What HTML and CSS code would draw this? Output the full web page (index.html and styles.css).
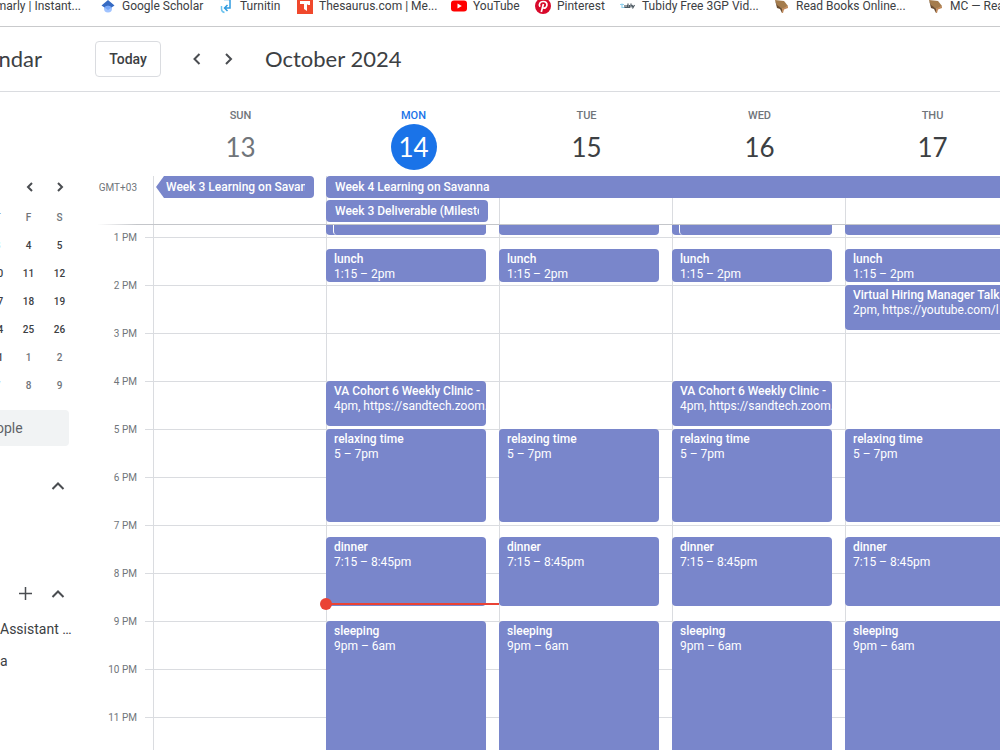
FILE: index.html
```html
<!DOCTYPE html>
<html lang="en">

<head>
    <meta charset="UTF-8">
    <meta name="viewport" content="width=device-width, initial-scale=1.0">
    <title>Calendar - October 2024</title>
    <link rel="stylesheet" href="styles.css">
</head>

<body>
    <nav class="bookmarks">
        <a href="#" class="cut">marly | Instant...</a>
        <a href="#">
            <svg width="16" height="16" viewBox="0 0 16 16"><circle cx="8" cy="10.500" r="4" fill="#a0c3ff"/><path d="M8 2L1.500 7.500l3 2a4.500 4.500 0 0 1 7 0l3-2z" fill="#356ac3"/><path d="M4.500 9.500a4.500 4.500 0 0 1 7 0L8 12z" fill="#76a7fa"/></svg>
            <span>Google Scholar</span>
        </a>
        <a href="#">
            <svg width="16" height="16" viewBox="0 0 16 16" fill="none" stroke="#2f9be0" stroke-width="1.500"><path d="M6 1.500h6v8.500H7M9.500 7L6.500 10l3 3"/><path d="M3.500 8v3c0 2 1 3 3 3.500" stroke="#6cc3ee"/></svg>
            <span>Turnitin</span>
        </a>
        <a href="#">
            <svg width="16" height="16" viewBox="0 0 16 16"><path d="M0 0h16v16H0z" fill="#f0482c"/><path d="M3 3h10v4h-2.500V6H10v7L7 11V6H3z" fill="#fff"/></svg>
            <span>Thesaurus.com | Me...</span>
        </a>
        <a href="#">
            <svg width="16" height="16" viewBox="0 0 16 16"><rect y="2.500" width="16" height="11" rx="3" fill="#f00"/><path d="M6.500 5.500v5L10.800 8z" fill="#fff"/></svg>
            <span>YouTube</span>
        </a>
        <a href="#">
            <svg width="16" height="16" viewBox="0 0 16 16"><circle cx="8" cy="8" r="8" fill="#d8092b"/><path d="M5 8.800C3.300 6 5.200 3.500 8.200 3.500c2.600 0 4.100 1.700 3.700 3.900-.4 2.400-2.700 3.500-4.100 2.100M8.400 6L6.300 14" fill="none" stroke="#fff" stroke-width="1.700"/></svg>
            <span>Pinterest</span>
        </a>
        <a href="#">
            <svg width="16" height="16" viewBox="0 0 16 16" fill="none"><path d="M0 6.500h4M2 5.500v4h3" stroke="#8fd0ee" stroke-width="1.200"/><path d="M5 7v2.500h2V7M8 5.500v4h1.500V7M11 5.500v4M12 7l1 2.500M14.500 7l-2 3.500" stroke="#4d5962" stroke-width="1.200"/></svg>
            <span>Tubidy Free 3GP Vid...</span>
        </a>
        <a href="#">
            <svg width="16" height="16" viewBox="0 0 16 16"><path d="M1 2l9 1 4 5-5 3-6-3z" fill="#a47c4d"/><path d="M1 2l2 5 5 3.500v4.500L6 11 3 10z" fill="#6b4d30"/><path d="M8 10.500l6-2.500v2l-4 1.500L9 15H8z" fill="#c08a5c"/></svg>
            <span>Read Books Online...</span>
        </a>
        <a href="#">
            <svg width="16" height="16" viewBox="0 0 16 16"><path d="M1 2l9 1 4 5-5 3-6-3z" fill="#a47c4d"/><path d="M1 2l2 5 5 3.500v4.500L6 11 3 10z" fill="#6b4d30"/><path d="M8 10.500l6-2.500v2l-4 1.500L9 15H8z" fill="#c08a5c"/></svg>
            <span>MC — Read</span>
        </a>
    </nav>

    <header class="topbar">
        <div class="brand">ndar</div>
        <button class="today">Today</button>
        <button class="icon-btn" aria-label="Previous week"><svg width="20" height="20" viewBox="0 0 20 20"><path d="M12.500 5L7.500 10l5 5"/></svg></button>
        <button class="icon-btn" aria-label="Next week"><svg width="20" height="20" viewBox="0 0 20 20"><path d="M7 5l5 5-5 5"/></svg></button>
        <h1>October 2024</h1>
    </header>

    <main>
        <aside class="sidebar">
            <div class="mini-nav">
                <button class="icon-btn" aria-label="Previous month"><svg width="16" height="16" viewBox="0 0 16 16"><path d="M10 4L6 8l4 4"/></svg></button>
                <button class="icon-btn" aria-label="Next month"><svg width="16" height="16" viewBox="0 0 16 16"><path d="M6 4l4 4-4 4"/></svg></button>
            </div>
            <table class="mini-cal">
                <thead>
                    <tr><th>T</th><th>F</th><th>S</th></tr>
                </thead>
                <tbody>
                    <tr><td>3</td><td>4</td><td>5</td></tr>
                    <tr><td>10</td><td>11</td><td>12</td></tr>
                    <tr><td>17</td><td>18</td><td>19</td></tr>
                    <tr><td>24</td><td>25</td><td>26</td></tr>
                    <tr><td>31</td><td class="other">1</td><td class="other">2</td></tr>
                    <tr><td class="other">7</td><td class="other">8</td><td class="other">9</td></tr>
                </tbody>
            </table>
            <input class="people" type="text" placeholder="ople" aria-label="People">
            <div class="side-head">
                <button class="icon-btn" aria-label="Collapse my calendars"><svg width="20" height="20" viewBox="0 0 20 20"><path d="M4.500 13L10 7.500l5.500 5.500"/></svg></button>
            </div>
            <div class="side-head others">
                <button class="icon-btn" aria-label="Add calendar"><svg width="20" height="20" viewBox="0 0 20 20"><path class="thin" d="M9.500 3v13M3 9.500h13"/></svg></button>
                <button class="icon-btn" aria-label="Collapse other calendars"><svg width="20" height="20" viewBox="0 0 20 20"><path d="M4.500 13L10 7.500l5.500 5.500"/></svg></button>
            </div>
            <ul class="cal-list">
                <li>Assistant …</li>
                <li>a</li>
            </ul>
        </aside>

        <section class="week">
            <div class="day-heads">
                <div class="day past"><h2>SUN</h2><span>13</span></div>
                <div class="day now"><h2>MON</h2><span>14</span></div>
                <div class="day"><h2>TUE</h2><span>15</span></div>
                <div class="day"><h2>WED</h2><span>16</span></div>
                <div class="day"><h2>THU</h2><span>17</span></div>
            </div>

            <div class="all-day">
                <div class="zone">GMT+03</div>
                <div class="all-day-grid">
                    <i class="line d1"></i>
                    <i class="line d2"></i>
                    <i class="line d3"></i>
                    <i class="line d4"></i>
                    <i class="line d5"></i>
                    <div class="chip continued"><span>Week 3 Learning on Savanna</span></div>
                    <div class="chip long"><span>Week 4 Learning on Savanna</span></div>
                    <div class="chip single"><span>Week 3 Deliverable (Milestone</span></div>
                </div>
            </div>
            <div class="divider"></div>

            <div class="timed">
                <div class="hours">
                    <div>1 PM</div>
                    <div>2 PM</div>
                    <div>3 PM</div>
                    <div>4 PM</div>
                    <div>5 PM</div>
                    <div>6 PM</div>
                    <div>7 PM</div>
                    <div>8 PM</div>
                    <div>9 PM</div>
                    <div>10 PM</div>
                    <div>11 PM</div>
                </div>
                <div class="columns">
                    <div class="column"></div>
                    <div class="column">
                        <div class="event morning"></div>
                        <div class="event morning stacked"></div>
                        <div class="event lunch"><b>lunch</b><p>1:15 – 2pm</p></div>
                        <div class="event clinic"><b>VA Cohort 6 Weekly Clinic -</b><p>4pm, https://sandtech.zoom.us</p></div>
                        <div class="event relax"><b>relaxing time</b><p>5 – 7pm</p></div>
                        <div class="event dinner"><b>dinner</b><p>7:15 – 8:45pm</p></div>
                        <div class="event sleep"><b>sleeping</b><p>9pm – 6am</p></div>
                        <div class="now-line"></div>
                    </div>
                    <div class="column">
                        <div class="event morning"></div>
                        <div class="event lunch"><b>lunch</b><p>1:15 – 2pm</p></div>
                        <div class="event relax"><b>relaxing time</b><p>5 – 7pm</p></div>
                        <div class="event dinner"><b>dinner</b><p>7:15 – 8:45pm</p></div>
                        <div class="event sleep"><b>sleeping</b><p>9pm – 6am</p></div>
                    </div>
                    <div class="column">
                        <div class="event morning"></div>
                        <div class="event morning stacked"></div>
                        <div class="event lunch"><b>lunch</b><p>1:15 – 2pm</p></div>
                        <div class="event clinic"><b>VA Cohort 6 Weekly Clinic -</b><p>4pm, https://sandtech.zoom.us</p></div>
                        <div class="event relax"><b>relaxing time</b><p>5 – 7pm</p></div>
                        <div class="event dinner"><b>dinner</b><p>7:15 – 8:45pm</p></div>
                        <div class="event sleep"><b>sleeping</b><p>9pm – 6am</p></div>
                    </div>
                    <div class="column">
                        <div class="event morning"></div>
                        <div class="event lunch"><b>lunch</b><p>1:15 – 2pm</p></div>
                        <div class="event talk"><b>Virtual Hiring Manager Talk</b><p>2pm, https://youtube.com/l</p></div>
                        <div class="event relax"><b>relaxing time</b><p>5 – 7pm</p></div>
                        <div class="event dinner"><b>dinner</b><p>7:15 – 8:45pm</p></div>
                        <div class="event sleep"><b>sleeping</b><p>9pm – 6am</p></div>
                    </div>
                </div>
            </div>
        </section>
    </main>
</body>

</html>
```
FILE: styles.css
```css
* {
    box-sizing: border-box;
    margin: 0;
    padding: 0;
}

body {
    display: flex;
    flex-direction: column;
    height: 100vh;
    overflow: hidden;
    background: #fff;
    color: #3c4043;
    font-family: Roboto, "Liberation Sans", sans-serif;
    font-size: 14px;
}

button {
    border: 0;
    background: none;
    cursor: pointer;
}

li {
    list-style: none;
}

/* bookmarks */
.bookmarks {
    display: grid;
    grid-template-columns: 100px 118px 79px 154px 84px 85px 154px 154px auto;
    flex: none;
    padding-bottom: 14px;
    border-bottom: 1px solid #c9cacc;
}

.bookmarks a {
    display: flex;
    align-items: center;
    gap: 6px;
    height: 12px;
    color: #3c4043;
    font: 12px/16px Roboto, sans-serif;
    text-decoration: none;
    white-space: nowrap;
}

.bookmarks svg {
    flex: none;
}

.bookmarks .cut {
    justify-content: flex-end;
    padding-right: 19px;
}

/* top bar */
.topbar {
    display: flex;
    align-items: center;
    flex: none;
    height: 65px;
    border-bottom: 1px solid #dadce0;
}

.brand {
    display: flex;
    justify-content: flex-end;
    width: 95px;
    padding-right: 53px;
    font: 22px/28px Lato, sans-serif;
}

.today {
    width: 66px;
    height: 36px;
    margin-right: 20px;
    border: 1px solid #dadce0;
    border-radius: 4px;
    color: #3c4043;
    font: 500 14px/20px Roboto, sans-serif;
}

.icon-btn {
    display: flex;
    align-items: center;
    justify-content: center;
    width: 32px;
    height: 32px;
}

.icon-btn path {
    fill: none;
    stroke: #4a4d51;
    stroke-width: 2;
}

.icon-btn .thin {
    stroke-width: 1.5;
}

.topbar h1 {
    margin-left: 20px;
    font: 22px/28px Lato, sans-serif;
}

main {
    display: flex;
    flex: 1;
    min-height: 0;
}

/* sidebar */
.sidebar {
    display: flex;
    flex-direction: column;
    align-items: flex-end;
    flex: none;
    width: 75px;
    padding-top: 79px;
    overflow: hidden;
}

.mini-nav {
    display: flex;
}

.mini-nav .icon-btn {
    width: 30px;
}

.mini-cal {
    flex: none;
    width: 93px;
    border-collapse: collapse;
    table-layout: fixed;
    text-align: center;
    font-size: 10px;
}

.mini-cal th,
.mini-cal td {
    height: 28px;
    font-weight: 500;
}

.mini-cal th,
.mini-cal .other {
    color: #70757a;
}

.people {
    flex: none;
    width: 73px;
    height: 36px;
    margin: 11px 6px 0 0;
    border: 0;
    border-radius: 4px;
    background: #f1f3f4;
    font: 14px/20px Roboto, sans-serif;
}

.people::placeholder {
    color: #5f6368;
}

.side-head {
    display: flex;
    margin: 24px 1px 0 0;
}

.others {
    margin-top: 76px;
}

.cal-list {
    width: 75px;
    margin-top: 3px;
    line-height: 32px;
    white-space: nowrap;
}

/* week */
.week {
    display: flex;
    flex-direction: column;
    flex: 1;
    min-width: 0;
    overflow: hidden;
}

.day-heads,
.all-day-grid,
.columns {
    display: grid;
    grid-template-columns: repeat(5, minmax(173px, 1fr));
}

.day-heads {
    flex: none;
    padding: 16px 0 6px 79px;
}

.day {
    display: flex;
    flex-direction: column;
    align-items: center;
}

.day h2 {
    color: #70757a;
    font-size: 11px;
    font-weight: 500;
    line-height: 16px;
}

.day span {
    width: 46px;
    border-radius: 50%;
    font: 26px/46px Lato, sans-serif;
    text-align: center;
}

.past span {
    color: #70757a;
}

.day.now h2 {
    color: #1a73e8;
}

.now span {
    background: #1a73e8;
    color: #fff;
}

.all-day {
    display: flex;
    flex: none;
}

.zone {
    flex: none;
    width: 78px;
    padding-right: 16px;
    color: #70757a;
    font-size: 10px;
    line-height: 24px;
    text-align: right;
}

.all-day-grid {
    flex: 1;
    grid-template-rows: 24px 24px;
}

.line {
    grid-row: 1 / 3;
    border-left: 1px solid #dadce0;
}

.d1 { grid-column: 1; }
.d2 { grid-column: 2; }
.d3 { grid-column: 3; }
.d4 { grid-column: 4; }
.d5 { grid-column: 5; }

.chip {
    height: 22px;
    padding: 0 9px;
    border-radius: 4px;
    background: #7986cb;
    color: #fff;
    font-size: 12px;
    font-weight: 500;
    line-height: 22px;
}

.chip span {
    display: block;
    overflow: hidden;
    white-space: nowrap;
}

.continued {
    grid-area: 1 / 1;
    margin: 0 12px 0 3px;
    padding-left: 10px;
    clip-path: polygon(0 50%, 8px 0, 100% 0, 100% 100%, 8px 100%);
}

.long {
    grid-area: 1 / 2 / 2 / 6;
}

.single {
    grid-area: 2 / 2;
    margin-right: 11px;
}

.divider {
    flex: none;
    height: 1px;
    margin-left: 22px;
    background: linear-gradient(to right, #fff, #c4c6ca 40px);
}

.timed {
    display: flex;
    flex: 1;
    min-height: 0;
    overflow: hidden;
}

.hours {
    flex: none;
    width: 70px;
    padding: 1px 8px 0 0;
    color: #70757a;
    font-size: 10px;
    line-height: 24px;
    text-align: right;
}

.hours div {
    margin-bottom: 24px;
}

.columns {
    flex: 1;
    height: 540px;
    padding-left: 8px;
    background: linear-gradient(#dadce0 1px, transparent 1px) 0 12px / 100% 48px;
}

/* one row is a quarter of an hour, the first one starts at 12:45 */
.column {
    display: grid;
    grid-template-rows: repeat(45, 12px);
    position: relative;
    box-shadow: inset 1px 0 #dadce0;
}

.event {
    grid-column: 1;
    margin: 0 13px 3px 0;
    padding: 3px 0 0 8px;
    border-radius: 4px;
    background: #7986cb;
    color: #fff;
    font-size: 12px;
    line-height: 15px;
    white-space: nowrap;
    overflow: hidden;
}

.event b {
    display: block;
    font-weight: 500;
}

.morning {
    grid-row: 1;
    margin-bottom: 2px;
    border-radius: 0 0 4px 4px;
}

.stacked {
    margin-left: 7px;
    border-left: 1px solid #fff;
}

.lunch { grid-row: 3 / 6; }
.talk { grid-row: 6 / 10; }
.clinic { grid-row: 14 / 18; }
.relax { grid-row: 18 / 26; }
.dinner { grid-row: 27 / 33; }
.sleep { grid-row: 34 / 46; }

.now-line {
    position: absolute;
    top: 378px;
    left: 0;
    z-index: 1;
    width: 100%;
    height: 2px;
    background: #ea4335;
}

.now-line::before {
    content: "";
    position: absolute;
    top: -5px;
    left: -6px;
    width: 12px;
    height: 12px;
    border-radius: 50%;
    background: #ea4335;
}
```
